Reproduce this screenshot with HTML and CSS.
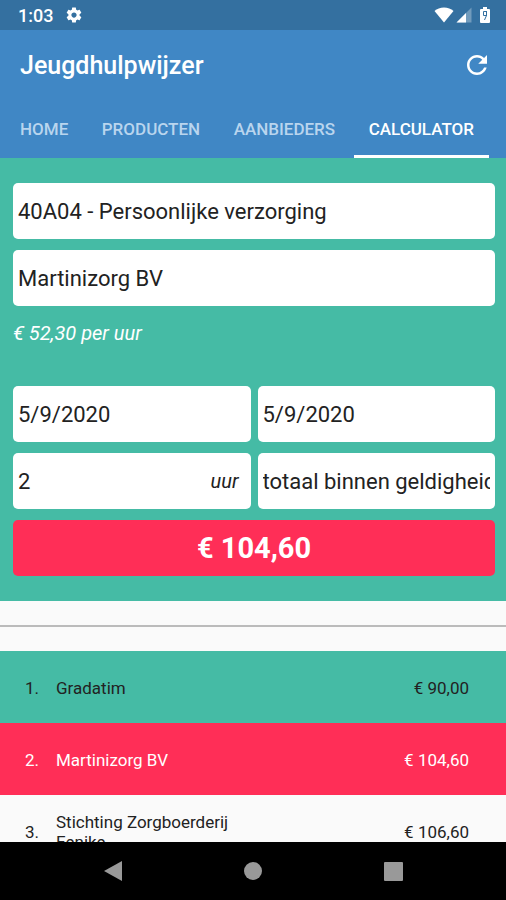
FILE: index.html
```html
<!DOCTYPE html>
<html lang="nl">

<head>
    <meta charset="UTF-8">
    <meta name="viewport" content="width=device-width, initial-scale=1.0">
    <title>Jeugdhulpwijzer</title>
    <link rel="stylesheet" href="styles.css">
</head>

<body>
    <div class="status-bar">
        <span class="time">1:03</span>
        <svg class="gear" width="18" height="18" viewBox="0 0 24 24" fill="#fff">
            <path d="M19.43 12.98c.04-.32.07-.64.07-.98s-.03-.66-.07-.98l2.11-1.65c.19-.15.24-.42.12-.64l-2-3.46c-.12-.22-.39-.3-.61-.22l-2.49 1c-.52-.4-1.08-.73-1.69-.98l-.38-2.65C14.46 2.18 14.25 2 14 2h-4c-.25 0-.46.18-.49.42l-.38 2.65c-.61.25-1.17.59-1.69.98l-2.49-1c-.23-.09-.49 0-.61.22l-2 3.46c-.13.22-.07.49.12.64l2.11 1.65c-.04.32-.07.65-.07.98s.03.66.07.98l-2.11 1.65c-.19.15-.24.42-.12.64l2 3.46c.12.22.39.3.61.22l2.49-1c.52.4 1.08.73 1.69.98l.38 2.65c.03.24.24.42.49.42h4c.25 0 .46-.18.49-.42l.38-2.65c.61-.25 1.17-.59 1.69-.98l2.49 1c.23.09.49 0 .61-.22l2-3.46c.12-.22.07-.49-.12-.64l-2.11-1.65zM12 15.5c-1.930 0-3.500-1.570-3.500-3.500s1.570-3.500 3.500-3.500 3.500 1.570 3.500 3.500-1.570 3.500-3.500 3.500z" />
        </svg>
        <div class="status-icons">
            <svg width="20" height="16" viewBox="0 0 20 16" fill="#fff">
                <path d="M10 15.500L.5 4C3 1.800 6.200.600 10 .600S17 1.800 19.500 4z" />
            </svg>
            <svg width="16" height="16" viewBox="0 0 16 16" fill="#fff">
                <path d="M15.500.500v15H.500z" opacity=".3" />
                <path d="M10 6v9.500H.500z" />
            </svg>
            <svg class="battery" width="10" height="16" viewBox="0 0 10 16">
                <path d="M3 0h4v2h2q1 0 1 1v12q0 1-1 1H1q-1 0-1-1V3q0-1 1-1h2z" fill="#fff" />
                <path d="M7 4.500H3.500V8.500H6.500L4.500 13M6.500 5V9" fill="none" stroke="#3470a0" />
            </svg>
        </div>
    </div>

    <header class="header">
        <div class="title-bar">
            <h1>Jeugdhulpwijzer</h1>
            <button class="refresh" type="button" aria-label="Vernieuwen">
                <svg width="30" height="30" viewBox="0 0 24 24" fill="#fff">
                    <path d="M17.650 6.350C16.200 4.900 14.210 4 12 4c-4.420 0-7.990 3.580-7.990 8s3.570 8 7.990 8c3.730 0 6.840-2.550 7.730-6h-2.080c-.82 2.330-3.040 4-5.650 4-3.310 0-6-2.690-6-6s2.690-6 6-6c1.660 0 3.140.69 4.220 1.780L13 11h7V4l-2.350 2.350z" />
                </svg>
            </button>
        </div>
        <nav class="tabs">
            <a href="#">HOME</a>
            <a href="#">PRODUCTEN</a>
            <a href="#">AANBIEDERS</a>
            <a href="#" class="active">CALCULATOR</a>
        </nav>
    </header>

    <main class="content">
        <form class="calculator" action="#">
            <select class="field" aria-label="Product">
                <option>40A04 - Persoonlijke verzorging</option>
            </select>
            <select class="field" aria-label="Aanbieder">
                <option>Martinizorg BV</option>
            </select>
            <p class="rate">€ 52,30 per uur</p>
            <div class="field-row">
                <input class="field" type="text" value="5/9/2020" aria-label="Begindatum">
                <input class="field" type="text" value="5/9/2020" aria-label="Einddatum">
            </div>
            <div class="field-row">
                <div class="field amount">
                    <input type="text" id="amount" value="2">
                    <label for="amount">uur</label>
                </div>
                <select class="field" aria-label="Periode">
                    <option>totaal binnen geldigheid</option>
                </select>
            </div>
            <button class="total" type="submit">€ 104,60</button>
        </form>

        <hr>

        <table class="results">
            <tr class="cheapest">
                <td class="rank">1.</td>
                <td class="name">Gradatim</td>
                <td class="price">€ 90,00</td>
            </tr>
            <tr class="selected">
                <td class="rank">2.</td>
                <td class="name">Martinizorg BV</td>
                <td class="price">€ 104,60</td>
            </tr>
            <tr>
                <td class="rank">3.</td>
                <td class="name">Stichting Zorgboerderij<br>Eenike</td>
                <td class="price">€ 106,60</td>
            </tr>
        </table>
    </main>

    <div class="nav-bar">
        <button type="button" aria-label="Terug">
            <svg width="22" height="22" viewBox="0 0 22 22" fill="#999">
                <path d="M20 1v20L2 11z" />
            </svg>
        </button>
        <button type="button" aria-label="Startscherm">
            <svg width="22" height="22" viewBox="0 0 22 22" fill="#999">
                <circle cx="11" cy="11" r="9" />
            </svg>
        </button>
        <button type="button" aria-label="Recent">
            <svg width="22" height="22" viewBox="0 0 22 22" fill="#999">
                <rect x="2" y="2" width="19" height="19" rx="1" />
            </svg>
        </button>
    </div>
</body>

</html>
```
FILE: styles.css
```css
* {
    margin: 0;
    padding: 0;
    box-sizing: border-box;
    font-family: Roboto, sans-serif;
}

body {
    height: 100vh;
    display: flex;
    flex-direction: column;
    overflow: hidden;
    background-color: #fafafa;
    color: #222;
}

button {
    border: none;
    background: none;
    cursor: pointer;
}

svg {
    display: block;
}

.status-bar {
    display: flex;
    align-items: center;
    flex-shrink: 0;
    height: 30px;
    padding: 0 16px 0 18px;
    background-color: #3470a0;
    color: #fff;
}

.time {
    font-size: 18px;
    font-weight: 500;
    margin-right: 12px;
}

.status-icons {
    display: flex;
    gap: 2px;
    margin-left: auto;
}

.battery {
    margin-left: 6px;
}

.header {
    flex-shrink: 0;
    background-color: #4087c5;
    color: #fff;
}

.title-bar {
    display: flex;
    align-items: center;
    justify-content: space-between;
    height: 70px;
    padding: 0 14px 0 20px;
}

h1 {
    font-size: 25px;
    font-weight: 500;
}

.tabs {
    display: flex;
    justify-content: space-between;
    height: 58px;
    padding: 0 17px 0 5px;
}

.tabs a {
    padding: 0 15px;
    border-bottom: 3px solid transparent;
    color: #b9d5ee;
    font-size: 17px;
    font-weight: 500;
    line-height: 58px;
    text-decoration: none;
}

.tabs a.active {
    border-color: #fff;
    color: #fff;
}

.content {
    flex: 1;
    min-height: 0;
    overflow: hidden;
}

.calculator {
    display: flex;
    flex-direction: column;
    gap: 11px;
    padding: 25px 11px 25px 13px;
    background-color: #45bba5;
}

.field {
    appearance: none;
    width: 100%;
    min-width: 0;
    height: 56px;
    padding: 0 5px;
    border: none;
    border-radius: 5px;
    background-color: #fff;
    color: #222;
    font-size: 22px;
}

.field-row {
    display: grid;
    grid-template-columns: 1fr 1fr;
    gap: 7px;
}

.rate {
    height: 58px;
    color: #fff;
    font-size: 20px;
    font-style: italic;
    line-height: 32px;
}

.amount {
    display: flex;
    align-items: center;
    padding-right: 12px;
}

.amount input {
    flex: 1;
    min-width: 0;
    border: none;
    color: #222;
    font-size: 22px;
}

.amount label {
    font-size: 20px;
    font-style: italic;
}

.total {
    height: 56px;
    border-radius: 5px;
    background-color: #ff2e57;
    color: #fff;
    font-size: 29px;
    font-weight: bold;
}

hr {
    height: 2px;
    margin: 24px 0;
    border: none;
    background-color: #bbb;
}

.results {
    width: 100%;
    border-collapse: collapse;
    font-size: 17px;
    line-height: 20px;
}

.results tr {
    height: 72px;
}

.results td {
    padding-top: 2px;
}

.rank {
    width: 56px;
    padding-left: 25px;
}

.price {
    padding-right: 37px;
    text-align: right;
}

.cheapest {
    background-color: #45bba5;
}

.selected {
    background-color: #ff2e57;
    color: #fff;
}

.nav-bar {
    display: flex;
    justify-content: center;
    gap: 118px;
    flex-shrink: 0;
    height: 58px;
    background-color: #000;
}
```
